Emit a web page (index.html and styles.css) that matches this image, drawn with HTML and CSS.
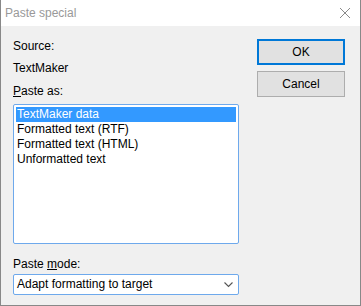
FILE: index.html
```html
<!DOCTYPE html>
<html>
<head>
<meta charset="utf-8">
<link rel="stylesheet" href="styles.css">
</head>
<body>
<div class="window">
  <div class="titlebar">
    <span class="title">Paste special</span>
    <svg class="close" width="12" height="12" viewBox="0 0 12 12"><path d="M1 1 L11 11 M11 1 L1 11" stroke="#8a8a8a" stroke-width="1" fill="none"/></svg>
  </div>
  <div class="content">
    <div class="left">
      <div class="label first">Source:</div>
      <div class="label second">TextMaker</div>
      <div class="label third"><u>P</u>aste as:</div>
      <div class="listbox">
        <div class="item selected">TextMaker data</div>
        <div class="item">Formatted text (RTF)</div>
        <div class="item">Formatted text (HTML)</div>
        <div class="item">Unformatted text</div>
      </div>
      <div class="label mode">Paste <u>m</u>ode:</div>
      <div class="combo">
        <span>Adapt formatting to target</span>
        <svg class="chev" width="10" height="6" viewBox="0 0 10 6"><path d="M0.5 0.5 L4.5 4.5 L8.5 0.5" stroke="#555" stroke-width="1.1" fill="none"/></svg>
      </div>
    </div>
    <div class="buttons">
      <div class="btn default">OK</div>
      <div class="btn">Cancel</div>
    </div>
  </div>
</div>
</body>
</html>
```
FILE: styles.css
```css
html, body {
  margin: 0;
  padding: 0;
  background: #f0f0f0;
}
body {
  font-family: "Liberation Sans", Arial, sans-serif;
  font-size: 12px;
  line-height: 15px;
  color: #000;
}
.window {
  width: 361px;
  height: 306px;
  box-sizing: border-box;
  border: 1px solid #888;
  border-top: none;
  background: #f0f0f0;
  display: flex;
  flex-direction: column;
}
.titlebar {
  height: 26px;
  background: #fff;
  display: flex;
  align-items: center;
  justify-content: space-between;
  padding: 0 9px 0 4px;
  flex-shrink: 0;
}
.title {
  color: #999;
  font-size: 12px;
}
.close {
  display: block;
}
.content {
  flex: 1;
  display: flex;
  padding: 13px 15px 0 12px;
  gap: 18px;
}
.left {
  width: 226px;
  display: flex;
  flex-direction: column;
}
.label {
  height: 15px;
}
.second { margin-top: 7px; }
.third { margin-top: 8px; }
.listbox {
  margin-top: 5px;
  height: 140px;
  box-sizing: border-box;
  border: 1px solid #6ea9ec;
  border-radius: 2px;
  background: #fff;
  padding: 2px;
}
.item {
  height: 15px;
  padding-left: 1px;
  white-space: nowrap;
}
.item.selected {
  background: #3399ff;
  color: #fff;
}
.mode { margin-top: 13px; }
.combo {
  margin-top: 2px;
  height: 21px;
  box-sizing: border-box;
  border: 1px solid #6ea9ec;
  border-radius: 2px;
  background: #fff;
  padding: 0 4px 0 3px;
  display: flex;
  align-items: center;
  justify-content: space-between;
  line-height: 19px;
}
.chev { display: block; margin-top: 1px; }
.buttons {
  width: 88px;
  display: flex;
  flex-direction: column;
  gap: 6px;
}
.btn {
  height: 26px;
  box-sizing: border-box;
  border: 1px solid #adadad;
  background: #e1e1e1;
  display: flex;
  align-items: center;
  justify-content: center;
}
.btn.default {
  border: 2px solid #0078d7;
}
```
